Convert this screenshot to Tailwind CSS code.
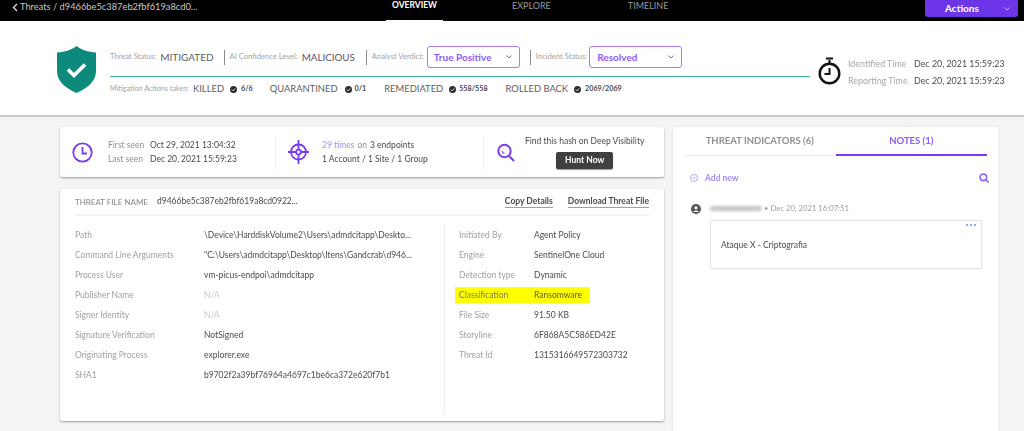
<!DOCTYPE html>
<html lang="en">
<head>
  <meta charset="UTF-8">
  <title>Threat details</title>
  <script src="https://cdn.jsdelivr.net/npm/@tailwindcss/browser@4"></script>
</head>
<body class="bg-[#f4f4f4] font-['Lato',sans-serif] text-[#4a4a52] w-[1024px] h-[431px] overflow-hidden blur-[0.35px]">

  <!-- Top nav -->
  <nav class="h-[21px] bg-black flex text-[9px]">
    <div class="w-[386px] shrink-0 pl-[12px] pt-[1px] flex items-start text-[#c9c9c9] text-[9.3px] leading-[11px]">
      <svg class="w-[6px] h-[9px] mr-[2px] mt-[2px]" viewBox="0 0 6 9" fill="none" stroke="#ddd" stroke-width="1.4"><path d="M5 1 1.5 4.5 5 8"/></svg>
      <span>Threats / d9466be5c387eb2fbf619a8cd0...</span>
    </div>
    <div class="w-[57px] shrink-0 h-[21px] border-b-[1px] border-white text-center text-white font-bold text-[8.5px] leading-[11px]">OVERVIEW</div>
    <div class="ml-[69px] shrink-0 text-[#9a9a9a] leading-[11px]">EXPLORE</div>
    <div class="ml-[77px] shrink-0 text-[#9a9a9a] leading-[11px]">TIMELINE</div>
    <div class="ml-auto mr-[6px] w-[93px] shrink-0 h-[17px] bg-[#6d35e8] rounded-b-[3px] flex items-center text-white text-[10px] font-bold pl-[20px]">
      <span>Actions</span>
      <svg class="w-[6px] h-[4px] ml-[25px]" viewBox="0 0 6 4" fill="none" stroke="#cbb8f8"><path d="M.5.5 3 3 5.5.5"/></svg>
    </div>
  </nav>

  <!-- Status header -->
  <header class="h-[96px] bg-white border-b-2 border-[#c8c8c8] flex pl-[57px]">
    <svg class="w-[39px] h-[47px] mt-[25px] shrink-0" viewBox="0 0 39 47">
      <path d="M19.5 0 C24 3.5 31 6 39 6.5 V25 C39 35 31 42 19.5 47 C8 42 0 35 0 25 V6.5 C8 6 15 3.5 19.5 0Z" fill="#0d8a7c"/>
      <path d="M11 23.5 17 29.5 28 18.5" fill="none" stroke="#fff" stroke-width="3.6"/>
    </svg>
    <div class="ml-[14px] w-[700px] shrink-0 pt-[25px]">
      <div class="h-[31px] flex items-start border-b border-[#3fb0a4]">
        <div class="flex items-center h-[22px] text-[7.6px] text-[#a3a3a8]">
          <span>Threat Status:</span>
          <span class="text-[10px] ml-[4px] text-[#5c5c66]">MITIGATED</span>
          <span class="h-[15px] border-l border-[#8c8c8c] ml-[10px] mr-[5px]"></span>
          <span>AI Confidence Level:</span>
          <span class="text-[9.8px] ml-[4px] text-[#5c4f66]">MALICIOUS</span>
          <span class="h-[15px] border-l border-[#8c8c8c] ml-[11px] mr-[5px]"></span>
          <span>Analyst Verdict:</span>
          <div class="ml-[3px] w-[93px] h-[22px] border border-[#a67cf5] rounded-[3px] flex items-center justify-between pl-[6px] pr-[7px] text-[10px] font-bold text-[#8b5cf6]">
            <span>True Positive</span>
            <svg class="w-[6px] h-[4px]" viewBox="0 0 6 4" fill="none" stroke="#8b5cf6"><path d="M.5.5 3 3 5.5.5"/></svg>
          </div>
          <span class="h-[15px] border-l border-[#8c8c8c] ml-[10px] mr-[5px]"></span>
          <span>Incident Status:</span>
          <div class="ml-[2px] w-[93px] h-[22px] border border-[#a67cf5] rounded-[3px] flex items-center justify-between pl-[7px] pr-[7px] text-[10px] font-bold text-[#8b5cf6]">
            <span>Resolved</span>
            <svg class="w-[6px] h-[4px]" viewBox="0 0 6 4" fill="none" stroke="#8b5cf6"><path d="M.5.5 3 3 5.5.5"/></svg>
          </div>
        </div>
      </div>
      <div class="flex items-center h-[25px] text-[7.2px] text-[#a3a3a8]">
        <span>Mitigation Actions taken:</span>
        <span class="text-[9.4px] ml-[4px] text-[#5c5c66]">KILLED</span>
        <svg class="w-[7px] h-[7px] ml-[6px]" viewBox="0 0 8 8"><circle cx="4" cy="4" r="4" fill="#2b2b2b"/><path d="M2 4 3.5 5.5 6 2.8" fill="none" stroke="#fff"/></svg>
        <span class="ml-[4px] text-[#4a4a52] font-bold">6/6</span>
        <span class="text-[9.4px] ml-[17px] text-[#5c5c66]">QUARANTINED</span>
        <svg class="w-[7px] h-[7px] ml-[7px]" viewBox="0 0 8 8"><circle cx="4" cy="4" r="4" fill="#2b2b2b"/><path d="M2 4 3.5 5.5 6 2.8" fill="none" stroke="#fff"/></svg>
        <span class="ml-[3px] text-[#4a4a52] font-bold">0/1</span>
        <span class="text-[9.4px] ml-[18px] text-[#5c5c66]">REMEDIATED</span>
        <svg class="w-[7px] h-[7px] ml-[6px]" viewBox="0 0 8 8"><circle cx="4" cy="4" r="4" fill="#2b2b2b"/><path d="M2 4 3.5 5.5 6 2.8" fill="none" stroke="#fff"/></svg>
        <span class="ml-[3px] text-[#4a4a52] font-bold">558/558</span>
        <span class="text-[9.4px] ml-[18px] text-[#5c5c66]">ROLLED BACK</span>
        <svg class="w-[7px] h-[7px] ml-[6px]" viewBox="0 0 8 8"><circle cx="4" cy="4" r="4" fill="#2b2b2b"/><path d="M2 4 3.5 5.5 6 2.8" fill="none" stroke="#fff"/></svg>
        <span class="ml-[4px] text-[#4a4a52] font-bold">2069/2069</span>
      </div>
    </div>
    <svg class="w-[23px] h-[28px] ml-[8px] mt-[36px] shrink-0" viewBox="0 0 23 28" fill="none" stroke="#111">
      <circle cx="11.5" cy="16.5" r="9.8" stroke-width="2.4"/>
      <path d="M11.5 3V6M8 1.5H15" stroke-width="2.2"/>
      <path d="M11.5 11V17H6.5" stroke-width="2"/>
    </svg>
    <div class="ml-[7px] mt-[34px] text-[8.9px] leading-[17px] whitespace-nowrap">
      <div class="flex"><span class="w-[66px] text-[#a8a8ac]">Identified Time</span><span>Dec 20, 2021 15:59:23</span></div>
      <div class="flex"><span class="w-[66px] text-[#a8a8ac]">Reporting Time</span><span>Dec 20, 2021 15:59:23</span></div>
    </div>
  </header>

  <main class="flex pl-[60px] pt-[10px]">
    <div class="w-[604px] shrink-0">
      <!-- Seen summary -->
      <section class="h-[50px] bg-white rounded-[2px] shadow-[0_1px_2px_#9a9a9a] flex items-center text-[8.5px] whitespace-nowrap">
        <div class="w-[216px] shrink-0 h-[35px] flex items-center pl-[12px] border-r border-[#efefef]">
          <svg class="w-[21px] h-[21px]" viewBox="0 0 21 21" fill="none" stroke="#7c3aed" stroke-width="1.8"><circle cx="10.5" cy="10.5" r="9.2"/><path d="M10.5 5V11.5H15"/></svg>
          <div class="ml-[15px] leading-[14px]">
            <div class="flex"><span class="w-[42px] text-[#8f8f95]">First seen</span><span>Oct 29, 2021 13:04:32</span></div>
            <div class="flex"><span class="w-[42px] text-[#8f8f95]">Last seen</span><span>Dec 20, 2021 15:59:23</span></div>
          </div>
        </div>
        <div class="w-[208px] shrink-0 h-[35px] flex items-center pl-[12px] border-r border-[#efefef]">
          <svg class="w-[21px] h-[24px]" viewBox="0 0 21 24" fill="none" stroke="#7c3aed" stroke-width="1.8"><circle cx="10.5" cy="12" r="7.5"/><circle cx="10.5" cy="12" r="2.4"/><path d="M10.5 0V9.5M10.5 14.5V24M0 12H8M13 12H21"/></svg>
          <div class="ml-[13px] leading-[14px]">
            <div><span class="text-[#a78bfa]">29 times</span><span class="text-[#8f8f95] ml-[3px]">on</span><span class="ml-[3px]">3 endpoints</span></div>
            <div>1 Account / 1 Site / 1 Group</div>
          </div>
        </div>
        <div class="flex items-center pl-[13px]">
          <svg class="w-[18px] h-[19px]" viewBox="0 0 18 19" fill="none" stroke="#7c3aed" stroke-width="2"><circle cx="7.5" cy="8" r="6.2"/><path d="M12 13 17 18"/><path d="M5 8A3 3 0 0 0 7.5 10.5" stroke-width="1.2"/></svg>
          <div class="ml-[10px] flex flex-col items-center">
            <div class="leading-[12px]">Find this hash on Deep Visibility</div>
            <div class="mt-[5px] w-[57px] h-[17px] bg-[#404040] rounded-[2px] text-white font-bold text-center leading-[17px] shadow-[0_1px_1px_#999]">Hunt Now</div>
          </div>
        </div>
      </section>

      <!-- Threat file details -->
      <section class="mt-[12px] h-[232px] bg-white rounded-[2px] shadow-[0_1px_2px_#9a9a9a] px-[15px]">
        <div class="h-[27px] flex items-center border-b-2 border-[#f3f3f3] text-[8.5px]">
          <span class="text-[8px] text-[#85858b] w-[82px]">THREAT FILE NAME</span>
          <span>d9466be5c387eb2fbf619a8cd0922...</span>
          <span class="ml-auto font-bold border-b border-[#a78bfa] leading-[12px]">Copy Details</span>
          <span class="ml-[15px] font-bold border-b border-[#a78bfa] leading-[12px]">Download Threat File</span>
        </div>
        <div class="flex pt-[9px] h-[205px]">
          <dl class="w-[370px] shrink-0 text-[8.5px] border-r border-[#ececec] h-[189px]">
            <div class="flex h-[20px] items-center"><dt class="w-[129px] text-[#a0a0a6]">Path</dt><dd>\Device\HarddiskVolume2\Users\admdcitapp\Deskto...</dd></div>
            <div class="flex h-[20px] items-center"><dt class="w-[129px] text-[#a0a0a6]">Command Line Arguments</dt><dd>"C:\Users\admdcitapp\Desktop\Itens\Gandcrab\d946...</dd></div>
            <div class="flex h-[20px] items-center"><dt class="w-[129px] text-[#a0a0a6]">Process User</dt><dd>vm-picus-endpoi\admdcitapp</dd></div>
            <div class="flex h-[20px] items-center"><dt class="w-[129px] text-[#a0a0a6]">Publisher Name</dt><dd class="text-[#c8c8c8]">N/A</dd></div>
            <div class="flex h-[20px] items-center"><dt class="w-[129px] text-[#a0a0a6]">Signer Identity</dt><dd class="text-[#c8c8c8]">N/A</dd></div>
            <div class="flex h-[20px] items-center"><dt class="w-[129px] text-[#a0a0a6]">Signature Verification</dt><dd>NotSigned</dd></div>
            <div class="flex h-[20px] items-center"><dt class="w-[129px] text-[#a0a0a6]">Originating Process</dt><dd>explorer.exe</dd></div>
            <div class="flex h-[20px] items-center"><dt class="w-[129px] text-[#a0a0a6]">SHA1</dt><dd>b9702f2a39bf76964a4697c1be6ca372e620f7b1</dd></div>
          </dl>
          <dl class="flex-1 text-[8.5px] pl-[14px]">
            <div class="flex h-[20px] items-center"><dt class="w-[75px] text-[#a0a0a6]">Initiated By</dt><dd>Agent Policy</dd></div>
            <div class="flex h-[20px] items-center"><dt class="w-[75px] text-[#a0a0a6]">Engine</dt><dd>SentinelOne Cloud</dd></div>
            <div class="flex h-[20px] items-center"><dt class="w-[75px] text-[#a0a0a6]">Detection type</dt><dd>Dynamic</dd></div>
            <div class="flex h-[16px] my-[2px] w-[135px] -ml-[4px] pl-[4px] items-center bg-[#ffff00]"><dt class="w-[75px] text-[#7a7a50]">Classification</dt><dd class="text-[#5c5c20]">Ransomware</dd></div>
            <div class="flex h-[20px] items-center"><dt class="w-[75px] text-[#a0a0a6]">File Size</dt><dd>91.50 KB</dd></div>
            <div class="flex h-[20px] items-center"><dt class="w-[75px] text-[#a0a0a6]">Storyline</dt><dd>6F868A5C586ED42E</dd></div>
            <div class="flex h-[20px] items-center"><dt class="w-[75px] text-[#a0a0a6]">Threat Id</dt><dd>1315316649572303732</dd></div>
          </dl>
        </div>
      </section>
    </div>

    <!-- Notes panel -->
    <aside class="ml-[9px] w-[325px] h-[320px] bg-white rounded-[2px] shadow-[0_0_3px_#ddd] px-[11px]">
      <div class="flex h-[29px] border-b border-[#eeeeee] text-[9.5px] font-bold">
        <div class="w-[152px] text-center text-[#8f8f95] leading-[27px]">THREAT INDICATORS (6)</div>
        <div class="w-[152px] h-[29px] text-center text-[#8b5cf6] leading-[27px] border-b-2 border-[#7c3aed]">NOTES (1)</div>
      </div>
      <div class="flex items-center mt-[16px] pl-[6px] text-[8.5px] font-bold text-[#a78bfa]">
        <svg class="w-[8px] h-[8px]" viewBox="0 0 8 8" fill="none" stroke="#a78bfa" stroke-width=".8"><circle cx="4" cy="4" r="3.5"/><path d="M2.5 4H5.5"/></svg>
        <span class="ml-[7px]">Add new</span>
        <svg class="w-[10px] h-[10px] ml-auto -mr-[2px]" viewBox="0 0 10 10" fill="none" stroke="#8b5cf6" stroke-width="1.6"><circle cx="4.3" cy="4.3" r="3.3"/><path d="M6.8 6.8 9.5 9.5"/></svg>
      </div>
      <div class="flex mt-[18px] pl-[7px]">
        <svg class="w-[10px] h-[10px] mt-[1px] shrink-0" viewBox="0 0 10 10"><circle cx="5" cy="5" r="5" fill="#555"/><circle cx="5" cy="3.8" r="1.6" fill="#fff"/><path d="M2 8A3.2 2.4 0 0 1 8 8Z" fill="#fff"/></svg>
        <div class="ml-[9px] flex-1">
          <div class="flex items-center text-[7.7px] text-[#a0a0a6] h-[12px]">
            <span class="w-[52px] h-[5px] bg-[#c4c4c8] rounded-full blur-[1.5px]"></span>
            <span class="ml-[2px]">• Dec 20, 2021 16:07:51</span>
          </div>
          <div class="mt-[5px] w-[272px] h-[49px] border border-[#e2e2e2] rounded-[2px] shadow-[0_0_2px_#eee] pl-[10px] pt-[18px] relative text-[8.5px] leading-[12px]">
            Ataque X - Criptografia
            <span class="absolute right-[5px] top-[3px] flex gap-[2px]">
              <i class="w-[2px] h-[2px] bg-[#6c8ef5] rounded-full"></i><i class="w-[2px] h-[2px] bg-[#6c8ef5] rounded-full"></i><i class="w-[2px] h-[2px] bg-[#6c8ef5] rounded-full"></i>
            </span>
          </div>
        </div>
      </div>
    </aside>
  </main>
</body>
</html>
